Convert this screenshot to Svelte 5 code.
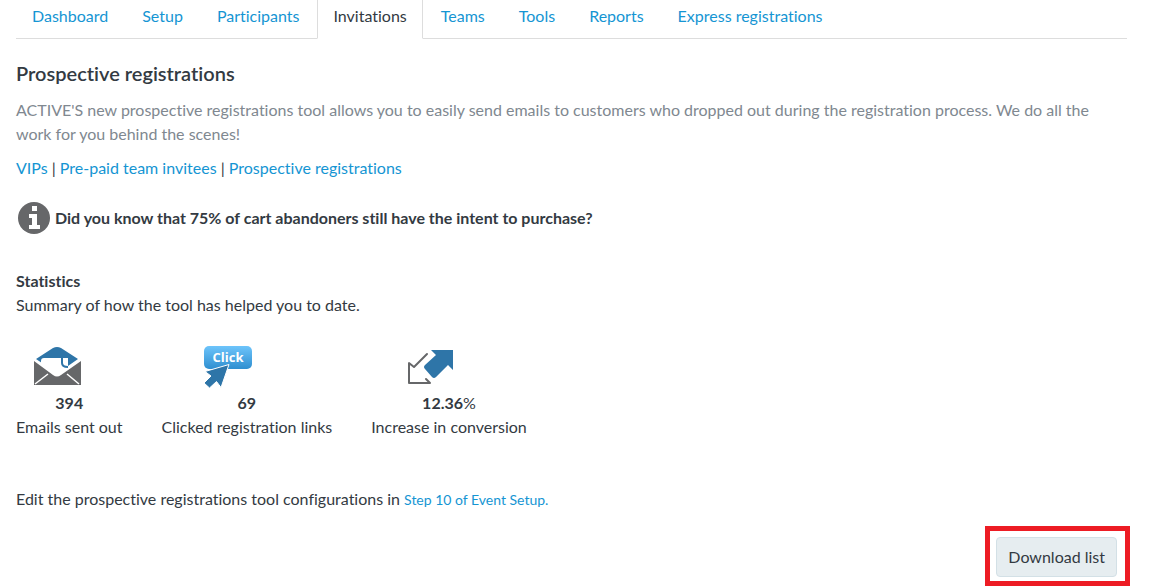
<script lang="ts">
  const tabs = [
    'Dashboard',
    'Setup',
    'Participants',
    'Invitations',
    'Teams',
    'Tools',
    'Reports',
    'Express registrations'
  ];

  const stats = [
    { icon: 'envelope', value: '394', label: 'Emails sent out' },
    { icon: 'click', value: '69', label: 'Clicked registration links' },
    { icon: 'arrows', value: '12.36', unit: '%', label: 'Increase in conversion' }
  ];

  let activeTab = $state('Invitations');
</script>

<div class="page">
  <nav class="tabs" aria-label="Event">
    {#each tabs as tab}
      <a
        href="#{tab.toLowerCase().replace(' ', '-')}"
        class="tab"
        class:active={tab === activeTab}
        aria-current={tab === activeTab ? 'page' : undefined}
        onclick={() => (activeTab = tab)}
      >{tab}</a>
    {/each}
  </nav>

  <main>
    <h1>Prospective registrations</h1>
    <p class="intro">
      ACTIVE'S new prospective registrations tool allows you to easily send emails to customers who
      dropped out during the registration process. We do all the work for you behind the scenes!
    </p>

    <p class="links">
      <a href="#vips">VIPs</a> | <a href="#invitees">Pre-paid team invitees</a> |
      <a href="#prospective">Prospective registrations</a>
    </p>

    <div class="fact">
      <svg class="info" viewBox="0 0 32 32" aria-hidden="true">
        <circle cx="16" cy="16" r="16" fill="#666769" />
        <path fill="#fff" d="M14 4h5v5h-5zM11 12h8v11h3v4H11v-4h3v-7h-3z" />
      </svg>
      <strong>Did you know that 75% of cart abandoners still have the intent to purchase?</strong>
    </div>

    <section>
      <h2>Statistics</h2>
      <p>Summary of how the tool has helped you to date.</p>

      <div class="stats">
        {#each stats as stat}
          <div class="stat">
            {#if stat.icon === 'envelope'}
              <svg class="icon narrow" viewBox="0 0 48 44" aria-hidden="true">
                <path fill="#2e75a8" d="M3 14 20 3Q24 1 28 3L45 14 35 21V13H12v7z" />
                <path fill="#fff" d="M8 16q0-3 3-3h17v7q0 2 3 3l-7 8L8 20z" />
                <path fill="none" stroke="#2e75a8" stroke-width="2" d="M29 12v6q0 4 6 4" />
                <path fill="#666769" d="M1 16 20 30q4 3 8 0l20-14v24H1z" />
                <path stroke="#fff" stroke-width="1.500" fill="none" d="m2 39 13-10M46 39 34 29" />
              </svg>
            {:else if stat.icon === 'click'}
              <svg class="icon" viewBox="0 0 48 44" aria-hidden="true">
                <defs>
                  <linearGradient id="bubble" x2="0" y2="1">
                    <stop stop-color="#6dc4fb" />
                    <stop offset="1" stop-color="#2f8fd0" />
                  </linearGradient>
                </defs>
                <rect y="1" width="48" height="23" rx="5" fill="url(#bubble)" />
                <text class="bubble-text" x="24" y="17" text-anchor="middle">Click</text>
                <path
                  fill="#2e75a8"
                  stroke="#fff"
                  d="M25 19.500 1 26.500l6 4.500-7 7 5.500 5 7-6.500 4.500 6z"
                />
              </svg>
            {:else}
              <svg class="icon" viewBox="0 0 48 44" aria-hidden="true">
                <path
                  fill="none"
                  stroke="#666769"
                  stroke-width="2"
                  stroke-linecap="round"
                  stroke-linejoin="round"
                  d="M21 9 8 22l-5-4v20h21l-4-4"
                />
                <path fill="#2e75a8" d="M25 5h22v20l-5-5-12 12q-2 2-4 0l-7-8q-2-2 0-4L30 10z" />
              </svg>
            {/if}
            <div class="value"><b>{stat.value}</b>{stat.unit ?? ''}</div>
            <div>{stat.label}</div>
          </div>
        {/each}
      </div>
    </section>

    <p class="edit">
      Edit the prospective registrations tool configurations in
      <a href="#setup-step-10">Step 10 of Event Setup.</a>
    </p>

    <div class="actions">
      <div class="highlight">
        <button type="button">Download list</button>
      </div>
    </div>
  </main>
</div>

<style>
  :global(body) {
    background: #fff;
  }

  .page {
    padding: 0 35px 0 16px;
    color: #333a42;
    font-family: Lato, 'Liberation Sans', sans-serif;
    font-size: 16px;
    font-variant-ligatures: none;
    line-height: 24px;
  }

  a {
    color: #1595d3;
    text-decoration: none;
  }

  h1,
  h2,
  p {
    margin: 0;
  }

  /* Tabs */
  .tabs {
    display: flex;
    gap: 2px;
    margin-right: 3px;
    border-bottom: 1px solid #ddd;
  }

  .tab {
    margin-bottom: -1px;
    padding: 4px 15px 10px;
    border: 1px solid transparent;
    border-top: 0;
  }

  .tab.active {
    border-color: #ddd;
    border-bottom-color: #fff;
    background: #fff;
    color: #333a42;
  }

  /* Content */
  h1 {
    margin: 22px 0 13px;
    font-size: 20px;
    font-weight: 600;
  }

  .intro {
    margin-bottom: 10px;
    padding-right: 32px;
    color: #808890;
  }

  .fact {
    display: flex;
    align-items: center;
    gap: 5px;
    margin: 22px 0 35px 2px;
  }

  .info {
    width: 32px;
    height: 32px;
  }

  h2 {
    font-size: 16px;
    line-height: 24px;
  }

  /* Stats */
  .stats {
    display: flex;
    gap: 39px;
    margin: 28px 0 48px;
  }

  .stat {
    display: flex;
    flex-direction: column;
    align-items: center;
  }

  .icon {
    width: 48px;
    height: 44px;
    margin: 0 38px 2px 0;
  }

  .icon.narrow {
    margin-right: 24px;
  }

  .bubble-text {
    fill: #fff;
    font: bold 13px 'Open Sans', sans-serif;
  }

  .edit a {
    font-size: 14px;
  }

  /* Download */
  .actions {
    display: flex;
    justify-content: flex-end;
    margin-top: 14px;
  }

  .highlight {
    padding: 6px 8px 4px 6px;
    border: 5px solid #ed1c24;
  }

  button {
    display: block;
    height: 40px;
    padding: 0 11px;
    border: 1px solid #d3e0e6;
    border-radius: 4px;
    background: #e6edf0;
    color: #333a42;
    font: inherit;
    cursor: pointer;
  }
</style>
